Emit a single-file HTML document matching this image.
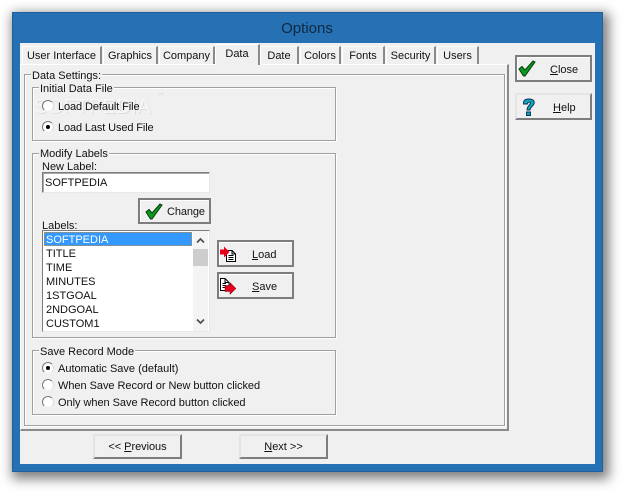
<!DOCTYPE html>
<html><head><meta charset="utf-8"><style>
html,body{margin:0;padding:0;background:#fff}
body{width:623px;height:492px;position:relative;overflow:hidden;font:11px "Liberation Sans",sans-serif;color:#111}
div,span.a,svg{position:absolute}
.t{white-space:nowrap;line-height:13px;margin-top:1px}
.win{left:12px;top:12px;width:591px;height:460px;background:#2670b4;box-shadow:3px 4px 11px 3px rgba(0,0,0,.5);outline:1px solid #1f5f9c;outline-offset:-1px}
.cl{left:20px;top:43px;width:575px;height:421px;background:#f0f0f0}
.tab{top:46px;height:18px;background:#f0f0f0;border-top:1px solid #fff;border-left:1px solid #fff;border-right:2px solid #8a8a8a;box-sizing:border-box;text-align:center;line-height:18px;white-space:nowrap}
.panel{left:20px;top:64px;width:489px;height:367px;box-sizing:border-box;border-top:1px solid #fff;border-left:1px solid #fff;border-right:2px solid #8a8a8a;border-bottom:2px solid #8a8a8a}
.g{box-sizing:border-box;border:1px solid #a0a0a0;box-shadow:1px 1px 0 #fff,inset 1px 1px 0 #fff}
.lg{background:#f0f0f0;padding:0 1px;line-height:13px;white-space:nowrap;margin-top:1px}
.b{box-sizing:border-box;background:#f0f0f0;border:2px solid;border-color:#e4e4e4 #7d7d7d #7d7d7d #e4e4e4;text-align:center;white-space:nowrap}
.k{border-color:#7d7d7d;box-shadow:inset 1px 1px 0 #fff}
.r{width:12px;height:12px;border-radius:50%;box-sizing:border-box;background:#fff;border:1px solid;border-color:#777 #ddd #eee #777}
.r i{position:absolute;left:3px;top:3px;width:4px;height:4px;border-radius:50%;background:#000;display:block}
.row{left:46px;white-space:nowrap;line-height:14px;margin-top:1px}
u{text-decoration:underline}
</style></head><body>
<div class="win"></div>
<div class="t" style="left:0;width:614px;top:19px;text-align:center;font-size:15px;line-height:17px;color:#10283f">Options</div>
<div class="cl"></div>

<div class="panel"></div>
<div class="tab" style="left:22px;width:80px">User Interface</div>
<div class="tab" style="left:103px;width:55px">Graphics</div>
<div class="tab" style="left:159px;width:56px">Company</div>
<div class="tab" style="left:260px;width:39px">Date</div>
<div class="tab" style="left:300px;width:41px">Colors</div>
<div class="tab" style="left:342px;width:43px">Fonts</div>
<div class="tab" style="left:386px;width:50px">Security</div>
<div class="tab" style="left:437px;width:42px">Users</div>
<div class="tab" style="left:215px;width:45px;top:44px;height:21px;line-height:19px;z-index:2;border-bottom:0">Data</div>

<div class="g" style="left:24px;top:74px;width:481px;height:352px"></div>
<div class="lg" style="left:31px;top:69px">Data Settings:</div>

<div class="g" style="left:32px;top:87px;width:304px;height:54px"></div>
<div class="lg" style="left:39px;top:82px">Initial Data File</div>
<div class="t" style="left:34px;top:95px;font-size:20px;line-height:22px;letter-spacing:.4px;color:#f7f7f7;text-shadow:1px 1px 0 #dcdcdc">SOFTPEDIA</div>
<div class="t" style="left:158px;top:92px;font-size:6px;line-height:7px;color:#d8d8d8">™</div>
<div class="r" style="left:42px;top:100px"></div>
<div class="t" style="left:58px;top:100px;letter-spacing:-.1px">Load Default File</div>
<div class="r" style="left:42px;top:121px"><i></i></div>
<div class="t" style="left:58px;top:121px;letter-spacing:-.12px">Load Last Used File</div>

<div class="g" style="left:32px;top:153px;width:304px;height:185px"></div>
<div class="lg" style="left:39px;top:147px">Modify Labels</div>
<div class="t" style="left:42px;top:160px">New Label:</div>
<div style="left:42px;top:172px;width:168px;height:21px;box-sizing:border-box;background:#fff;border:1px solid;border-color:#7d7d7d #e8e8e8 #e8e8e8 #7d7d7d;box-shadow:inset 1px 1px 0 #a8a8a8"></div>
<div class="t" style="left:45px;top:176px">SOFTPEDIA</div>

<div class="b k" style="left:138px;top:198px;width:73px;height:26px"></div>
<svg style="left:145px;top:203px" width="18" height="17" viewBox="0 0 18 17"><path d="M1 9 L4 6.5 L7 10 L15 1 L17 2 L7 16 L5.5 16 Z" fill="#0a9a1c" stroke="#063a10" stroke-width="1"/></svg>
<div class="t" style="left:167px;top:205px;letter-spacing:-.1px">Change</div>

<div class="t" style="left:42px;top:219px">Labels:</div>
<div style="left:42px;top:230px;width:168px;height:102px;box-sizing:border-box;background:#fff;border:1px solid;border-color:#7d7d7d #e8e8e8 #e8e8e8 #7d7d7d"></div>
<div style="left:44px;top:232px;width:148px;height:14px;background:#3399ff;outline:1px dotted #c98a3a;outline-offset:-1px"></div>
<div class="row" style="top:232px;color:#fff">SOFTPEDIA</div>
<div class="row" style="top:246px">TITLE</div>
<div class="row" style="top:260px">TIME</div>
<div class="row" style="top:274px">MINUTES</div>
<div class="row" style="top:288px">1STGOAL</div>
<div class="row" style="top:302px">2NDGOAL</div>
<div class="row" style="top:316px">CUSTOM1</div>
<div style="left:193px;top:231px;width:15px;height:100px;background:#f4f4f4"></div>
<div style="left:193px;top:249px;width:15px;height:17px;background:#cdcdcd"></div>
<svg style="left:196px;top:237px" width="9" height="7" viewBox="0 0 9 7"><path d="M1 5.5 L4.5 2 L8 5.5" fill="none" stroke="#505050" stroke-width="1.7"/></svg>
<svg style="left:196px;top:318px" width="9" height="7" viewBox="0 0 9 7"><path d="M1 1.5 L4.5 5 L8 1.5" fill="none" stroke="#505050" stroke-width="1.7"/></svg>

<div class="b k" style="left:217px;top:240px;width:77px;height:27px"></div>
<svg style="left:219px;top:245px" width="18" height="18" viewBox="0 0 18 18"><path d="M7.5 5.5 H13 L16.5 9 V16.5 H7.5 Z M13 5.5 V9 H16.5 M9.5 10.5 H14.5 M9.5 12.5 H14.5 M9.5 14.5 H14.5" fill="#fff" stroke="#000"/><path d="M1 4.5 H5 V1.5 L10.5 7 L5 12.5 V9.5 H1 Z" fill="#e8001c"/></svg>
<div class="t" style="left:252px;top:248px"><u>L</u>oad</div>

<div class="b k" style="left:217px;top:272px;width:77px;height:27px"></div>
<svg style="left:219px;top:277px" width="18" height="18" viewBox="0 0 18 18"><path d="M1.5 1.5 H6 L10 5.5 V13.5 H1.5 Z M6 1.5 V5.5 H10 M3.5 6.5 H7 M3.5 8.5 H7 M3.5 10.5 H7" fill="#fff" stroke="#000"/><path d="M6 8.5 H11 V5.5 L17 11.5 L11 17.5 V14.5 H6 Z" fill="#e8001c" stroke="#300" stroke-width=".4"/></svg>
<div class="t" style="left:252px;top:280px"><u>S</u>ave</div>

<div class="g" style="left:32px;top:350px;width:304px;height:65px"></div>
<div class="lg" style="left:39px;top:345px">Save Record Mode</div>
<div class="r" style="left:42px;top:362px"><i></i></div>
<div class="t" style="left:58px;top:362px">Automatic Save (default)</div>
<div class="r" style="left:42px;top:379px"></div>
<div class="t" style="left:58px;top:379px;letter-spacing:-.04px">When Save Record or New button clicked</div>
<div class="r" style="left:42px;top:396px"></div>
<div class="t" style="left:58px;top:396px;letter-spacing:-.04px">Only when Save Record button clicked</div>

<div class="b k" style="left:515px;top:55px;width:77px;height:27px"></div>
<svg style="left:518px;top:60px" width="18" height="17" viewBox="0 0 18 17"><path d="M1 9 L4 6.5 L7 10 L15 1 L17 2 L7 16 L5.5 16 Z" fill="#0a9a1c" stroke="#063a10" stroke-width="1"/></svg>
<div class="t" style="left:550px;top:63px"><u>C</u>lose</div>

<div class="b" style="left:515px;top:93px;width:77px;height:27px"></div>
<svg style="left:522px;top:98px" width="14" height="19" viewBox="0 0 14 19"><path d="M1.5 5 C1.5 2 4 1 7 1 C11 1 13 3 12 6 C11 8 8.5 9 8 12 H5 C5 8 8 7 8.5 5 C8.5 4 7 4 6 4.5 L5.5 6 H1.5 Z M4.5 14 H8.5 V17.5 H4.5 Z" fill="#12a4b8" stroke="#06305a" stroke-width=".9"/></svg>
<div class="t" style="left:553px;top:101px"><u>H</u>elp</div>

<div class="b" style="left:93px;top:434px;width:89px;height:25px;line-height:23px;letter-spacing:-.05px">&lt;&lt; <u>P</u>revious</div>
<div class="b" style="left:239px;top:434px;width:89px;height:25px;line-height:23px"><u>N</u>ext &gt;&gt;</div>
</body></html>
